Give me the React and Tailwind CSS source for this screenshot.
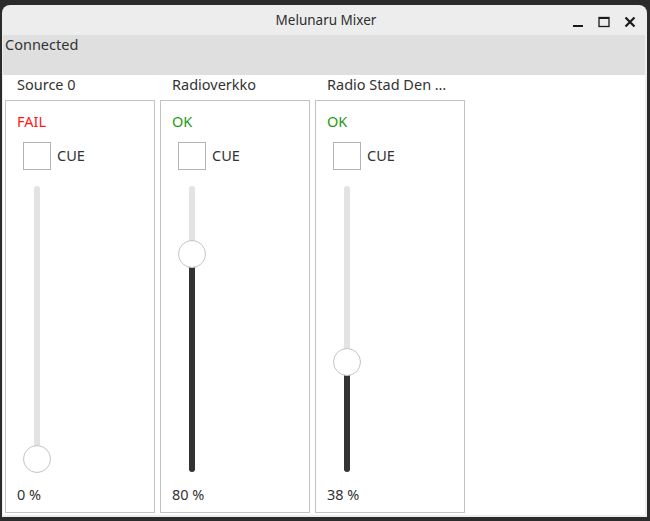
import React from "react";

const SOURCES = [
  { name: "Source 0", ok: false, value: 0 },
  { name: "Radioverkko", ok: true, value: 0.8 },
  { name: "Radio Stad Den …", ok: true, value: 0.38 },
];

export default function App() {
  return (
    <div className="w-[650px] h-[521px] bg-[#2b2b2b] pt-[5px] pl-[2px] overflow-hidden font-['Noto_Sans',sans-serif] text-[14.5px] text-[#333]">
      <div className="w-[645px] h-[512px] rounded-t-[8px] bg-[#ededed] flex flex-col pl-[1px] pr-[2px] pb-[2px]">
        {/* TITLE BAR */}
        <div className="h-[30px] flex items-center relative shrink-0">
          <div className="flex-1 text-center text-[13.5px] text-[#2e2e2e] pl-[4px]">Melunaru Mixer</div>
          <div className="absolute right-[9px] top-[2px] h-[30px] flex items-center gap-[14px]">
            <WinMin />
            <WinMax />
            <WinClose />
          </div>
        </div>

        {/* CONTENT */}
        <div className="flex-1 bg-white flex flex-col">
          <div className="h-[40px] bg-[#dfdfdf] px-[2px] leading-[18px]">Connected</div>

          <div className="flex gap-[5px] pl-[2px]">
            {SOURCES.map((s) => (
              <Channel key={s.name} {...s} />
            ))}
          </div>
        </div>
      </div>
    </div>
  );
}

function Channel({ name, ok, value }) {
  return (
    <div className="w-[150px] flex flex-col">
      <div className="h-[25px] pl-[12px] leading-[18px] whitespace-nowrap">{name}</div>
      <div className="h-[413px] border border-[#c3c3c3] pl-[11px] pt-[11px] flex flex-col">
        <div className={`leading-[18px] ${ok ? "text-[#1f9a12]" : "text-[#ff1a1a]"}`}>{ok ? "OK" : "FAIL"}</div>
        <div className="flex items-center mt-[12px] pl-[6px] gap-[6px]">
          <div className="w-[28px] h-[28px] border border-[#b4b4b4] bg-white" />
          <span>CUE</span>
        </div>
        <Slider value={value} />
        <div className="mt-[12px] leading-[20px]">{Math.round(value * 100)} %</div>
      </div>
    </div>
  );
}

function Slider({ value }) {
  const center = 17 + (1 - value) * 256;
  return (
    <div className="relative w-[28px] h-[286px] mt-[16px] ml-[6px]">
      <div className="absolute left-[11px] top-0 w-[6px] h-full rounded-full bg-[#e3e3e3]" />
      <div
        className="absolute left-[11px] bottom-0 w-[6px] rounded-b-full bg-[#333333]"
        style={{ top: center }}
      />
      <div
        className="absolute left-0 w-[28px] h-[28px] rounded-full bg-white border border-[#c4c4c4]"
        style={{ top: center - 14 }}
      />
    </div>
  );
}

function WinMin() {
  return (
    <svg width="12" height="12" viewBox="0 0 12 12">
      <rect x="1" y="9" width="10" height="2" fill="#1a1a1a" />
    </svg>
  );
}

function WinMax() {
  return (
    <svg width="12" height="12" viewBox="0 0 12 12">
      <rect x="1" y="1.5" width="10" height="9" fill="none" stroke="#1a1a1a" strokeWidth="1.3" />
      <rect x="1" y="1" width="10" height="2" fill="#1a1a1a" />
    </svg>
  );
}

function WinClose() {
  return (
    <svg width="12" height="12" viewBox="0 0 12 12">
      <path d="M1.5 1.5 L10.5 10.5 M10.5 1.5 L1.5 10.5" stroke="#1a1a1a" strokeWidth="2.2" />
    </svg>
  );
}
